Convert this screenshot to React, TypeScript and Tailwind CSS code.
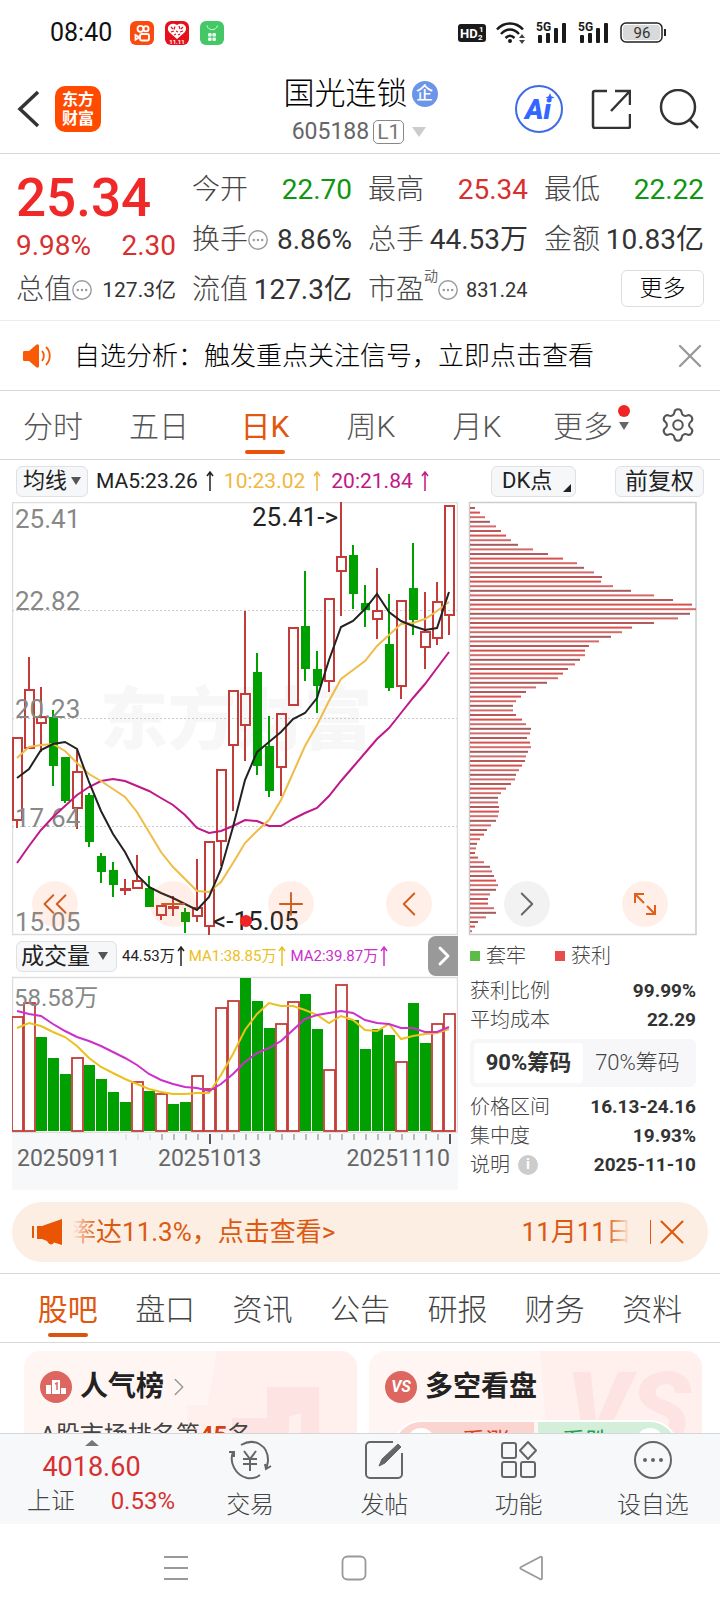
import type { ReactNode } from "react";
import { ChevronLeft, ChevronRight, ChevronsLeft, Minus, Plus, Settings, X } from "lucide-react";

const RED = "#c43c39";
const GREEN = "#00a000";
const STEP = 12;
const FIRST_X = 17;

// high, body top, body bottom, low, rising
type Candle = [number, number, number, number, 0 | 1];

const candles: Candle[] = [
  [737, 737, 821, 828, 1], [657, 689, 749, 749, 1], [687, 716, 724, 752, 1], [710, 717, 766, 786, 0],
  [757, 757, 801, 803, 0], [750, 771, 809, 829, 1], [793, 795, 842, 847, 0], [853, 856, 872, 883, 0],
  [862, 870, 885, 897, 0], [879, 888, 891, 895, 1], [855, 880, 889, 889, 1], [876, 888, 907, 907, 0],
  [905, 905, 916, 920, 1], [896, 906, 909, 916, 1], [908, 912, 922, 933, 0], [859, 907, 917, 922, 1],
  [841, 841, 927, 935, 1], [769, 769, 842, 866, 1], [690, 690, 746, 811, 1], [611, 693, 726, 761, 1],
  [653, 672, 766, 775, 0], [716, 746, 791, 797, 0], [713, 713, 768, 796, 1], [627, 627, 706, 706, 1],
  [571, 626, 669, 681, 0], [651, 669, 686, 713, 0], [598, 598, 682, 692, 1], [502, 556, 572, 616, 1],
  [545, 555, 594, 609, 0], [585, 603, 610, 627, 0], [568, 610, 620, 639, 1], [594, 644, 688, 691, 0],
  [600, 600, 687, 699, 1], [543, 588, 620, 635, 0], [592, 631, 648, 669, 1], [582, 601, 639, 645, 1],
  [505, 505, 616, 635, 1],
];

const ma5 = [
  778, 769, 750, 744, 742, 749, 782, 811, 834, 852, 875, 887, 893, 898, 904, 910, 897, 869, 827, 780,
  752, 742, 732, 719, 713, 698, 660, 627, 621, 609, 594, 612, 621, 626, 630, 628, 592,
];
const ma10 = [
  758, 747, 745, 744, 751, 763, 774, 781, 789, 797, 812, 832, 852, 867, 879, 891, 892, 882, 863, 843,
  831, 820, 800, 773, 746, 725, 701, 679, 670, 661, 646, 635, 624, 623, 619, 611, 602,
];
const ma20 = [
  863, 846, 830, 817, 806, 795, 787, 781, 779, 781, 786, 791, 798, 805, 815, 828, 833, 831, 826, 820,
  821, 826, 826, 819, 813, 808, 796, 781, 767, 753, 739, 728, 713, 698, 684, 668, 652,
];

// bar top, rising
const volumes: [number, 0 | 1][] = [
  [1017, 1], [1003, 1], [1037, 0], [1058, 0], [1074, 0], [1058, 1], [1065, 0], [1079, 0], [1092, 0],
  [1102, 0], [1082, 1], [1091, 0], [1094, 1], [1104, 0], [1102, 0], [1076, 1], [1089, 1], [1008, 1],
  [1001, 1], [978, 0], [1001, 0], [1028, 0], [1024, 1], [1002, 1], [994, 0], [1029, 0], [1070, 1],
  [985, 1], [1020, 0], [1049, 0], [1029, 0], [1035, 0], [1062, 1], [1003, 0], [1043, 0], [1024, 1],
  [1014, 1],
];
const volMa1 = [
  1028, 1023, 1026, 1032, 1037, 1046, 1058, 1067, 1073, 1079, 1084, 1089, 1092, 1094, 1094, 1093, 1093,
  1075, 1054, 1030, 1014, 1003, 1006, 1006, 1010, 1015, 1023, 1016, 1020, 1030, 1031, 1024, 1039, 1036,
  1034, 1033, 1029,
];
const volMa2 = [
  1011, 1014, 1016, 1024, 1031, 1037, 1041, 1046, 1052, 1058, 1065, 1074, 1080, 1084, 1087, 1088, 1091,
  1084, 1074, 1062, 1053, 1048, 1041, 1030, 1019, 1015, 1013, 1011, 1013, 1020, 1023, 1024, 1028, 1028,
  1032, 1032, 1027,
];

const chips = [
  5, 10, 15, 20, 26, 31, 36, 41, 48, 63, 78, 93, 107, 114, 124, 132, 131, 143, 161, 184, 203, 222, 226,
  220, 208, 184, 162, 152, 141, 129, 119, 115, 115, 110, 105, 98, 93, 88, 77, 66, 56, 51, 46, 43, 43, 46,
  52, 56, 61, 60, 57, 60, 61, 58, 56, 55, 52, 49, 46, 45, 41, 36, 31, 28, 28, 29, 29, 28, 26, 21, 17, 14,
  10, 7, 6, 5, 8, 14, 20, 22, 24, 26, 28, 26, 20, 18, 18, 24, 26, 16, 8, 5, 2,
];
const chipColors = ["#b9585a", "#d9514f", "#d66a6a", "#a35c5f", "#d66a6a"];

const points = (ys: number[]) => ys.map((y, i) => `${FIRST_X + i * STEP},${y}`).join(" ");

function UpArrow() {
  return (
    <svg viewBox="0 0 8 20" className="h-5 w-2 shrink-0" fill="none" stroke="currentColor" strokeWidth="1.5">
      <path d="M4 20V2M1 5l3-4 3 4" />
    </svg>
  );
}

function Dots() {
  return (
    <svg viewBox="0 0 20 20" className="h-5 w-5 shrink-0 text-[#999]" fill="none" stroke="currentColor" strokeWidth="1.4">
      <circle cx="10" cy="10" r="9.2" />
      <g fill="currentColor" stroke="none">
        <circle cx="5.8" cy="10" r="1.2" />
        <circle cx="10" cy="10" r="1.2" />
        <circle cx="14.2" cy="10" r="1.2" />
      </g>
    </svg>
  );
}

function Signal() {
  return (
    <svg viewBox="0 0 32 24" className="h-6 w-8" fill="#1a1a1a">
      <text x="0" y="10" fontSize="12" fontWeight="700" fontFamily="Roboto, sans-serif">5G</text>
      <rect x="2" y="14" width="4" height="8" rx="1" />
      <rect x="10" y="12" width="4" height="10" rx="1" />
      <rect x="18" y="7" width="4" height="15" rx="1" />
      <rect x="26" y="2" width="4" height="20" rx="1" />
    </svg>
  );
}

function StatusBar() {
  return (
    <div className="flex h-[62px] shrink-0 items-center pl-[50px] pr-[54px] pt-[3px] text-[#111]">
      <span className="text-[25px] leading-none">08:40</span>
      <div className="ml-[18px] flex gap-[11px]">
        <svg viewBox="0 0 24 24" className="h-6 w-6" fill="none" stroke="#fff" strokeWidth="1.8">
          <rect width="24" height="24" rx="6" fill="#fb4a10" stroke="none" />
          <circle cx="10.5" cy="7.8" r="3" />
          <circle cx="16" cy="7.8" r="2.6" />
          <rect x="10" y="13" width="9" height="6.5" rx="1.8" />
          <path d="M9.5 16.2l-4-2.2v4.6z" />
        </svg>
        <svg viewBox="0 0 24 24" className="h-6 w-6">
          <rect width="24" height="24" rx="6" fill="#e60f1c" />
          <path d="M12 18L4.5 11.5C0 6 6 0 12 4 18 0 24 6 19.5 11.5z" fill="#fff" />
          <path d="M6 6l2 2M10 5.5l-1 3M14 5l1 3M18 6l-2 2M6 11l3-1M11 10l2 1M15 11l3-1M9 14l2-1M13 14l2-1" stroke="#e60f1c" fill="none" strokeWidth="1.2" />
          <text x="12" y="22.5" fontSize="6" fontWeight="700" textAnchor="middle" fill="#fff">11.11</text>
        </svg>
        <svg viewBox="0 0 24 24" className="h-6 w-6">
          <rect width="24" height="24" rx="6" fill="#44c767" />
          <path d="M7 4.5c1 5.5 9.5 5.5 10.5 0" stroke="#d8f7df" fill="none" />
          <g fill="#e8fbec">
            <rect x="8" y="12" width="3.6" height="3.6" rx="1.2" />
            <rect x="12.4" y="12" width="3.6" height="3.6" rx="1.2" />
            <rect x="8" y="16.4" width="3.6" height="3.6" rx="1.2" />
            <rect x="12.4" y="16.4" width="3.6" height="3.6" rx="1.2" />
          </g>
        </svg>
      </div>
      <div className="ml-auto flex items-center gap-[10px]">
        <svg viewBox="0 0 28 20" className="h-5 w-7">
          <rect y="1" width="28" height="18" rx="3" fill="#1a1a1a" />
          <g fill="#fff" fontFamily="Roboto, sans-serif" fontWeight="700">
            <text x="2" y="15" fontSize="13">HD</text>
            <text x="21" y="9" fontSize="8">1</text>
            <text x="20" y="17" fontSize="8">2</text>
          </g>
        </svg>
        <svg viewBox="0 0 30 24" className="h-6 w-[30px]" fill="none" stroke="#1a1a1a" strokeWidth="2.5">
          <path d="M1 8.5C8 .5 20 .5 27 8.5M5 13c5.5-6 12.5-6 18 0M9.5 17c3-3 6-3 9 0" />
          <circle cx="14" cy="20" r="2" fill="#1a1a1a" stroke="none" />
          <path d="M23 17l3-4 3 4zM23 19l3 4 3-4z" fill="#444" stroke="none" />
        </svg>
        <Signal />
        <Signal />
        <svg viewBox="0 0 46 22" className="h-[22px] w-[46px]">
          <rect x="1" y="1" width="41" height="19" rx="5" fill="#fff" stroke="#222" strokeWidth="1.5" />
          <rect x="3" y="3" width="37" height="15" rx="3" fill="#d9d9d9" />
          <rect x="44" y="7" width="2" height="7" fill="#222" />
          <text x="22" y="16" fontSize="15" textAnchor="middle" fill="#333" fontFamily="Roboto, sans-serif">96</text>
        </svg>
      </div>
    </div>
  );
}

function Header() {
  return (
    <header className="flex h-[92px] shrink-0 items-center border-b border-[#d8d8d8] pl-4 pr-[21px] pt-[2px]">
      <button aria-label="返回" className="w-[39px]">
        <svg viewBox="0 0 24 38" className="h-[38px] w-6" fill="none" stroke="#333" strokeWidth="3.5">
          <path d="M22 2L4 19l18 17" />
        </svg>
      </button>
      <div className="grid h-[46px] w-[46px] place-items-center rounded-[10px] bg-[#ff4a00] text-center text-[16px] font-bold leading-[19px] text-white">
        <span>东方<br />财富</span>
      </div>
      <div className="flex flex-1 flex-col items-center pl-[105px] pt-[6px]">
        <h1 className="flex items-center gap-1 text-[31px] font-light leading-9 text-black">
          国光连锁
          <span className="grid h-[26px] w-[26px] place-items-center rounded-full bg-[#6b95e8] text-[17px] font-medium leading-none text-white">企</span>
        </h1>
        <button className="flex items-center gap-1 pr-[3px] pt-1 text-[23px] leading-8 text-[#666]">
          605188
          <span className="rounded-[5px] border border-[#888] px-[3px] text-[21px] leading-[22px] text-[#777]">L1</span>
          <svg viewBox="0 0 14 10" className="ml-1 h-[10px] w-[14px]" fill="#ccc"><path d="M0 0h14L7 10z" /></svg>
        </button>
      </div>
      <div className="flex items-center gap-7">
        <button className="grid h-12 w-12 place-items-center rounded-full border-2 border-[#3f6ae6] text-[#3366ff]">
          <svg viewBox="0 0 40 36" className="h-9 w-10" fill="currentColor">
            <text x="19" y="28" fontSize="28" fontWeight="900" fontStyle="italic" textAnchor="middle" fontFamily="Roboto, sans-serif">Ai</text>
            <path d="M31 2l1.3 3.2 3.2 1.3-3.2 1.3-1.3 3.2-1.3-3.2-3.2-1.3 3.2-1.3z" />
          </svg>
        </button>
        <button aria-label="分享">
          <svg viewBox="0 0 40 40" className="h-10 w-10" fill="none" stroke="#333" strokeWidth="2.5">
            <path d="M16 2H4a2 2 0 0 0-2 2v33a2 2 0 0 0 2 2h33a2 2 0 0 0 2-2V25M24 2h15v14M38 3L20 22" />
          </svg>
        </button>
        <button aria-label="搜索">
          <svg viewBox="0 0 40 40" className="h-10 w-10" fill="none" stroke="#333" strokeWidth="2.5">
            <circle cx="19" cy="18" r="17" />
            <path d="M30 30l9 9" />
          </svg>
        </button>
      </div>
    </header>
  );
}

function Quote({ label, value, tone = "text-[#333]", small = false, extra }: {
  label: string;
  value: string;
  tone?: string;
  small?: boolean;
  extra?: ReactNode;
}) {
  return (
    <div className="flex h-[50px] items-center">
      <span className="shrink-0 font-light text-[#444]">{label}</span>
      {extra}
      <span className={`ml-auto whitespace-nowrap ${tone} ${small ? "text-[21px]" : ""}`}>{value}</span>
    </div>
  );
}

function QuotePanel() {
  return (
    <section className="grid shrink-0 grid-cols-4 gap-x-4 border-b border-[#ececec] px-4 pb-[5px] pt-[11px] text-[28px] leading-none">
      <div>
        <div className="flex h-[66px] items-center text-[53px] font-medium text-[#f02828]">25.34</div>
        <div className="mb-1 flex h-[30px] items-center justify-between text-[#d83030]">
          <span>9.98%</span>
          <span>2.30</span>
        </div>
        <Quote label="总值" value="127.3亿" small extra={<Dots />} />
      </div>
      <div>
        <Quote label="今开" value="22.70" tone="text-[#0f960f]" />
        <Quote label="换手" value="8.86%" extra={<Dots />} />
        <Quote label="流值" value="127.3亿" />
      </div>
      <div>
        <Quote label="最高" value="25.34" tone="text-[#d83030]" />
        <Quote label="总手" value="44.53万" />
        <div className="flex h-[50px] items-center">
          <span className="font-light text-[#444]">市盈</span>
          <span className="self-start pt-1 text-[14px] text-[#666]">动</span>
          <Dots />
          <span className="ml-2 text-[20px] text-[#333]">831.24</span>
        </div>
      </div>
      <div>
        <Quote label="最低" value="22.22" tone="text-[#0f960f]" />
        <Quote label="金额" value="10.83亿" />
        <div className="flex h-[46px] items-center justify-end">
          <button className="h-[37px] w-[83px] rounded-md border border-[#ddd] text-[23px] font-light leading-none text-black">更多</button>
        </div>
      </div>
    </section>
  );
}

function Notice() {
  return (
    <div className="flex h-[70px] shrink-0 items-center border-b border-[#d8d8d8] pl-[22px] pr-[10px] text-[26px] leading-none">
      <svg viewBox="0 0 30 26" className="mr-[22px] h-[26px] w-[30px]" fill="none" stroke="#fa5a05" strokeWidth="1.8">
        <path d="M2 8h5l7-6c2-1.5 3-.5 3 1v20c0 1.5-1 2.5-3 1l-7-6H2c-1 0-1-1-1-2v-6c0-1 0-2 1-2z" fill="#fa5a05" stroke="none" />
        <path d="M20 8c2.5 2.5 2.5 7 0 10M24 4c5 4.5 5 13 0 18" />
      </svg>
      <span className="flex-1 whitespace-nowrap font-light text-black">自选分析：触发重点关注信号，立即点击查看</span>
      <button aria-label="关闭" className="text-[#999]"><X size={40} strokeWidth={1.4} /></button>
    </div>
  );
}

const periods = ["分时", "五日", "日K", "周K", "月K", "更多"];

function PeriodTabs() {
  return (
    <nav className="flex h-[69px] shrink-0 items-stretch border-b border-[#d8d8d8] text-[30px] leading-none text-[#555]">
      {periods.map((p) => (
        <button key={p} className={`relative flex-1 pt-[3px] ${p === "日K" ? "text-[#e2570f]" : "font-light"}`}>
          {p}
          {p === "日K" && <span className="absolute bottom-[5px] left-1/2 h-1 w-10 -translate-x-1/2 rounded-full bg-[#e8550a]" />}
          {p === "更多" && (
            <>
              <span className="absolute right-[6px] top-[14px] h-3 w-3 rounded-full bg-[#f02424]" />
              <svg viewBox="0 0 10 8" className="absolute right-[7px] top-[31px] h-2 w-[10px]" fill="#666"><path d="M0 0h10L5 8z" /></svg>
            </>
          )}
        </button>
      ))}
      <button aria-label="设置" className="grid w-[84px] place-items-center"><Settings size={38} strokeWidth={1.3} /></button>
    </nav>
  );
}

const chipButton = "flex items-center rounded-md border border-[#e0e1e4] bg-[#f6f7f9] leading-none text-[#222]";

function ChartToolbar() {
  return (
    <div className="flex h-[42px] items-center pl-1 text-[21px] leading-none text-[#222]">
      <button className={`${chipButton} h-[31px] w-[72px] justify-center gap-1 text-[22px]`}>
        均线
        <svg viewBox="0 0 10 8" className="h-2 w-[10px]" fill="#555"><path d="M0 0h10L5 8z" /></svg>
      </button>
      <span className="ml-2 flex items-center gap-2">MA5:23.26 <UpArrow /></span>
      <span className="ml-[10px] flex items-center gap-2 text-[#f0b840]">10:23.02 <UpArrow /></span>
      <span className="ml-[10px] flex items-center gap-2 text-[#c01888]">20:21.84 <UpArrow /></span>
      <button className={`${chipButton} ml-auto h-[31px] w-[85px] justify-between pl-[10px] pr-1 text-[22px]`}>
        DK点
        <svg viewBox="0 0 8 12" className="h-3 w-2 self-end" fill="#222"><path d="M8 0v8H0z" /></svg>
      </button>
      <button className={`${chipButton} ml-[39px] mr-4 h-[31px] w-[89px] justify-center text-[23px]`}>前复权</button>
    </div>
  );
}

function CandleChart() {
  return (
    <svg viewBox="12 502 446 434" className="block w-full" fontFamily="Roboto, sans-serif">
      <text x="100" y="744" fontSize="68" fontWeight="900" fill="#f7f7f7" fontFamily="'Noto Sans CJK SC', sans-serif">东方财富</text>
      <path d="M12.5 502.5h445v432h-445z" fill="none" stroke="#ddd" strokeWidth="1.5" />
      <path d="M12 610.5h445M12 718.5h445M12 826.5h445" stroke="#ccc" strokeDasharray="2 2" />
      {candles.map(([high, top, bottom, low, up], i) => {
        const x = FIRST_X + i * STEP;
        const color = up ? RED : GREEN;
        const doji = bottom - top < 5;
        return (
          <g key={i} stroke={color} strokeWidth="2">
            <path d={`M${x} ${high}V${top}M${x} ${bottom}V${low}`} />
            {up ? (
              <rect x={x - 4} y={top + 1} width="9" height={Math.max(bottom - top - 2, 1)} fill={doji ? color : "none"} />
            ) : (
              <rect x={x - 4} y={top} width="9" height={bottom - top} fill={color} stroke="none" />
            )}
          </g>
        );
      })}
      <g fontSize="26" fill="#888">
        <text x="15" y="528">25.41</text>
        <text x="15" y="610">22.82</text>
        <text x="15" y="718">20.23</text>
        <text x="15" y="827">17.64</text>
        <text x="15" y="931">15.05</text>
      </g>
      <g fill="none" strokeWidth="2">
        <polyline points={points(ma20)} stroke="#c01888" />
        <polyline points={points(ma10)} stroke="#f0bc48" />
        <polyline points={points(ma5)} stroke="#222" />
      </g>
      <g fontSize="26" fill="#222">
        <text x="338" y="526" textAnchor="end">25.41-&gt;</text>
        <text x="213" y="930">&lt;-15.05</text>
      </g>
      <circle cx="246" cy="921" r="6" fill="#f02424" />
    </svg>
  );
}

function ChipChart() {
  return (
    <svg viewBox="470 502 226 434" className="block w-full overflow-visible">
      <path d="M469.5 502.5h226.5v432h-226.5z" fill="none" stroke="#ccc" strokeWidth="1.5" />
      {chips.map((w, i) => (
        <rect key={i} x="470" y={507 + i * 4.6} width={w} height="2" fill={chipColors[i % 5]} />
      ))}
    </svg>
  );
}

function VolumeChart() {
  return (
    <svg viewBox="12 976 446 214" className="block w-full" fontFamily="Roboto, sans-serif">
      <rect x="12" y="1134" width="446" height="56" fill="#f7f8fa" />
      <path d="M12.5 977.5h445v155h-445z" fill="none" stroke="#ddd" strokeWidth="1.5" />
      {volumes.map(([top, up], i) => {
        const x = FIRST_X + i * STEP;
        return up ? (
          <rect key={i} x={x - 5} y={top} width="11" height={1131 - top} fill="#fff" stroke={RED} strokeWidth="1.8" />
        ) : (
          <rect key={i} x={x - 5} y={top} width="11" height={1131 - top} fill={GREEN} />
        );
      })}
      <text x="14" y="1006" fontSize="24" fill="#888" fontFamily="Roboto, 'Noto Sans CJK SC', sans-serif">58.58万</text>
      <g fill="none" strokeWidth="2">
        <polyline points={points(volMa1)} stroke="#ecc020" />
        <polyline points={points(volMa2)} stroke="#cc30cc" />
      </g>
      {Array.from({ length: 28 }, (_, i) => {
        const major = i === 7 || i === 27;
        const x = 126 + i * STEP;
        return <path key={i} d={`M${x} 1134V${major ? 1144 : 1140}`} stroke={major ? "#555" : i < 3 ? "#ddd" : "#999"} strokeWidth={major ? 2 : 1.3} />;
      })}
      <g fontSize="23" fill="#666">
        <text x="17" y="1166">20250911</text>
        <text x="158" y="1166">20251013</text>
        <text x="450" y="1166" textAnchor="end">20251110</text>
      </g>
    </svg>
  );
}

function RoundButton({ label, gray = false, children }: { label: string; gray?: boolean; children: ReactNode }) {
  return (
    <button
      aria-label={label}
      className={`grid h-[46px] w-[46px] place-items-center rounded-full ${gray ? "bg-[#000]/5 text-[#666]" : "bg-[#ff6414]/10 text-[#cf5f1d]"}`}
    >
      {children}
    </button>
  );
}

function Row({ label, value, children }: { label: string; value: string; children?: ReactNode }) {
  return (
    <div className="flex h-[29px] items-center text-[20px] leading-none">
      <span className="font-light text-[#444]">{label}</span>
      {children}
      <span className="ml-auto text-[19px] font-bold text-[#333]">{value}</span>
    </div>
  );
}

function ChipInfo() {
  return (
    <div>
      <div className="flex h-10 items-center text-[20px] font-light leading-none text-[#444]">
        <span className="mr-[6px] h-[10px] w-[10px] bg-[#5dbb48]" />套牢
        <span className="ml-[29px] mr-[6px] h-[10px] w-[10px] bg-[#e84c4a]" />获利
      </div>
      <Row label="获利比例" value="99.99%" />
      <Row label="平均成本" value="22.29" />
      <div className="my-[5px] flex h-12 rounded-md bg-[#f7f7f9] p-1 text-[22px] leading-none">
        <button className="flex-1 rounded bg-white font-bold text-[#333]">90%筹码</button>
        <button className="flex-1 font-light text-[#444]">70%筹码</button>
      </div>
      <Row label="价格区间" value="16.13-24.16" />
      <Row label="集中度" value="19.93%" />
      <Row label="说明" value="2025-11-10">
        <span className="ml-2 grid h-5 w-5 place-items-center rounded-full bg-[#ccc] text-[15px] font-bold text-white">i</span>
      </Row>
    </div>
  );
}

function Charts() {
  return (
    <section className="shrink-0 pl-3">
      <ChartToolbar />
      <div className="relative grid grid-cols-[446fr_226fr] gap-x-3 pr-6">
        <CandleChart />
        <ChipChart />
        <div className="absolute bottom-[9px] left-5 right-[52px] flex justify-between">
          <RoundButton label="最左"><ChevronsLeft size={42} strokeWidth={1.1} /></RoundButton>
          <RoundButton label="缩小"><Minus size={38} strokeWidth={1.2} /></RoundButton>
          <RoundButton label="放大"><Plus size={38} strokeWidth={1.2} /></RoundButton>
          <RoundButton label="左移"><ChevronLeft size={42} strokeWidth={1.1} /></RoundButton>
          <RoundButton label="右移" gray><ChevronRight size={42} strokeWidth={1.1} /></RoundButton>
          <RoundButton label="全屏">
            <svg viewBox="0 0 24 24" className="h-6 w-6" fill="none" stroke="#e0601a" strokeWidth="2">
              <path d="M2 11V2h9M2 2l9 9M22 13v9h-9M22 22l-8-8" />
            </svg>
          </RoundButton>
        </div>
      </div>
      <div className="grid grid-cols-[446fr_226fr] gap-x-3 pr-6">
        <div>
          <div className="flex h-10 items-center pl-1 text-[15px] leading-none text-[#222]">
            <button className={`${chipButton} h-[31px] w-[101px] shrink-0 justify-between px-1 text-[23px]`}>
              成交量
              <svg viewBox="0 0 10 8" className="mr-1 h-2 w-[10px]" fill="#555"><path d="M0 0h10L5 8z" /></svg>
            </button>
            <span className="ml-[5px] flex items-center gap-[2px]">44.53万 <UpArrow /></span>
            <span className="ml-1 flex items-center gap-[2px] text-[#ecc020]">MA1:38.85万 <UpArrow /></span>
            <span className="ml-1 flex items-center gap-[2px] text-[#cc30cc]">MA2:39.87万 <UpArrow /></span>
            <button aria-label="展开" className="ml-auto grid h-10 w-[30px] place-items-center rounded-l-lg bg-[#999] text-white">
              <ChevronRight size={32} strokeWidth={2.2} />
            </button>
          </div>
          <VolumeChart />
        </div>
        <ChipInfo />
      </div>
    </section>
  );
}

function Banner() {
  return (
    <div className="mx-3 mt-3 flex h-[60px] shrink-0 items-center rounded-full bg-[#fdeee4] pl-5 pr-[15px] text-[26px] leading-none text-[#dc5a10]">
      <svg viewBox="0 0 30 28" className="mr-2 h-7 w-[30px]" fill="#ea5504">
        <path d="M0 8h2v12H0zM5 8h5L30 1v26l-8-2.5c-2 3-5 2.5-7-1.5L10 21H5z" />
      </svg>
      <span>
        <span className="[mask-image:linear-gradient(to_right,transparent_10%,black)]">率</span>达11.3%，点击查看&gt;
      </span>
      <span className="ml-auto">
        11月11<span className="[mask-image:linear-gradient(to_left,transparent_5%,black)]">日</span>
      </span>
      <span className="ml-[18px] h-6 w-px bg-[#dc5a10]" />
      <button aria-label="关闭公告"><X size={42} strokeWidth={1.2} /></button>
    </div>
  );
}

const infoTabs = ["股吧", "盘口", "资讯", "公告", "研报", "财务", "资料"];

function InfoTabs() {
  return (
    <nav className="mt-[11px] flex h-[70px] shrink-0 border-y border-[#d8d8d8] px-[19px] text-[30px] leading-none text-[#444]">
      {infoTabs.map((t, i) => (
        <button key={t} className={`relative flex-1 pt-1 ${i === 0 ? "text-[#e2570f]" : "font-light"}`}>
          {t}
          {i === 0 && <span className="absolute bottom-[5px] left-1/2 h-1 w-10 -translate-x-1/2 rounded-full bg-[#d9550f]" />}
        </button>
      ))}
    </nav>
  );
}

function Cards() {
  return (
    <section className="grid shrink-0 grid-cols-2 gap-3 pl-6 pr-[18px] pt-2">
      <article className="relative h-[130px] overflow-hidden rounded-2xl bg-[#fff6f4] px-4 pt-5">
        <svg viewBox="0 0 180 130" className="absolute right-0 top-0 h-[130px] w-[180px]">
          <path d="M40 0h140v130H10V54h20z" fill="#fff0ee" />
          <path d="M90 36h52v94H55V67h35z" fill="#fde3e1" />
          <path d="M112 66l12-4v68h-12z" fill="#fff0ee" />
        </svg>
        <div className="relative flex items-center text-[28px] font-bold leading-8 text-[#222]">
          <svg viewBox="0 0 32 32" className="mr-2 h-8 w-8">
            <circle cx="16" cy="16" r="16" fill="#dd6660" />
            <path d="M6 14h5v9H6zM12 9h8v14h-8zM21 17h5v6h-5z" fill="#fff" />
            <path d="M15 13l2-1v7" stroke="#dd6660" fill="none" strokeWidth="1.5" />
          </svg>
          人气榜
          <ChevronRight size={30} strokeWidth={1.2} className="text-[#999]" />
        </div>
        <p className="relative mt-4 text-[24px] leading-8 text-[#444]">A股市场排名第<b className="text-[#d8400c]">45</b>名</p>
      </article>
      <article className="relative h-[130px] overflow-hidden rounded-2xl bg-[#fff6f4] px-4 pt-5">
        <svg viewBox="0 0 162 130" className="absolute right-0 top-0 h-[130px] w-[162px]">
          <path d="M0 0h162v130H10z" fill="#fff0ee" />
          <text x="26" y="92" fontSize="100" fontWeight="900" fontStyle="italic" fill="#fde4e2" fontFamily="Roboto, sans-serif">VS</text>
        </svg>
        <div className="relative flex items-center text-[28px] font-bold leading-8 text-[#222]">
          <span className="mr-2 grid h-8 w-8 place-items-center rounded-full bg-[#dd6660] text-[16px] italic text-white">VS</span>
          多空看盘
        </div>
        <div className="relative mx-2 mt-[17px] flex h-14 gap-1 overflow-hidden rounded-full border-2 border-white text-[24px] leading-10">
          <div className="flex flex-1 items-start justify-between bg-[#fbd3cf] pl-3 pr-6 text-[#d8401c]">
            <span className="mt-[6px] h-7 w-7 rounded-full bg-white" />看涨
          </div>
          <div className="flex flex-1 items-start justify-between bg-[#d3efda] pl-6 pr-3 text-[#20a050]">
            看跌<span className="mt-[6px] h-7 w-7 rounded-full bg-white" />
          </div>
        </div>
      </article>
    </section>
  );
}

const iconProps = { viewBox: "0 0 40 40", className: "h-10 w-10", fill: "none", stroke: "#666", strokeWidth: 2 };

const actions: { label: string; icon: ReactNode }[] = [
  {
    label: "交易",
    icon: (
      <svg {...iconProps} className="h-10 w-11" viewBox="-2 0 44 40">
        <path d="M3 12C-1 22 5 35 17 38c5 1 9 0 13-3M11 5C25-3 38 6 38 20c0 3-1 6-2 9M-1 12h5v5M41 26l-5 3-1-5" />
        <path d="M14 11l6 8 6-8M20 19v12M13 19h14M13 24h14" />
      </svg>
    ),
  },
  {
    label: "发帖",
    icon: (
      <svg {...iconProps}>
        <path d="M29 2H6a4 4 0 0 0-4 4v28a4 4 0 0 0 4 4h28a4 4 0 0 0 4-4V13" />
        <path d="M15 26l3-7L34 4l3 3-16 16z" fill="#666" strokeWidth="1" />
      </svg>
    ),
  },
  {
    label: "功能",
    icon: (
      <svg {...iconProps}>
        <rect x="3" y="3" width="14" height="15" rx="2" />
        <rect x="3" y="22" width="14" height="15" rx="2" />
        <rect x="22" y="22" width="14" height="15" rx="2" />
        <path d="M29 2l8 8.5-8 8.5-8-8.5z" strokeLinejoin="round" />
      </svg>
    ),
  },
  {
    label: "设自选",
    icon: (
      <svg {...iconProps}>
        <circle cx="20" cy="20" r="18" />
        <g fill="#666" stroke="none">
          <circle cx="12" cy="20" r="2" />
          <circle cx="20" cy="20" r="2" />
          <circle cx="28" cy="20" r="2" />
        </g>
      </svg>
    ),
  },
];

function BottomBar() {
  return (
    <footer className="flex h-[91px] shrink-0 border-t border-[#d4d6d9] bg-[#f7f8fa]">
      <button className="flex w-[183px] flex-col items-center leading-none text-[#d83030]">
        <svg viewBox="0 0 14 6" className="mt-[6px] h-[6px] w-[14px]" fill="#777"><path d="M0 6h14L7 0z" /></svg>
        <span className="mt-[5px] text-[27px] leading-8">4018.60</span>
        <span className="flex w-full justify-between pl-[27px] pr-2 text-[24px] leading-9">
          <span className="font-light text-[#444]">上证</span>0.53%
        </span>
      </button>
      {actions.map(({ label, icon }) => (
        <button key={label} className="flex flex-1 flex-col items-center pt-[6px] text-[24px] font-light leading-none text-[#444]">
          {icon}
          <span className="mt-[13px]">{label}</span>
        </button>
      ))}
    </footer>
  );
}

function SystemNav() {
  return (
    <div className="flex h-[88px] shrink-0 items-center justify-between pl-[163px] pr-[176px] text-[#999]">
      <svg viewBox="0 0 26 26" className="h-[26px] w-[26px]" stroke="currentColor" strokeWidth="1.8"><path d="M1 2h24M1 13h24M1 24h24" /></svg>
      <svg viewBox="0 0 26 26" className="h-[26px] w-[26px]" fill="none" stroke="currentColor" strokeWidth="1.8"><rect x="1.5" y="1.5" width="23" height="23" rx="5" /></svg>
      <svg viewBox="0 0 26 26" className="h-[26px] w-[26px]" fill="none" stroke="currentColor" strokeWidth="1.8" strokeLinejoin="round"><path d="M24 3v20c0 1-1 2-2 1L3 14c-1-.5-1-1.5 0-2L22 2c1-1 2 0 2 1z" /></svg>
    </div>
  );
}

export default function App() {
  return (
    <div className="flex h-screen flex-col bg-white font-['Roboto','Noto_Sans_CJK_SC',sans-serif]">
      <StatusBar />
      <main className="flex min-h-0 flex-1 flex-col overflow-hidden">
        <Header />
        <QuotePanel />
        <Notice />
        <PeriodTabs />
        <Charts />
        <Banner />
        <InfoTabs />
        <Cards />
      </main>
      <BottomBar />
      <SystemNav />
    </div>
  );
}
